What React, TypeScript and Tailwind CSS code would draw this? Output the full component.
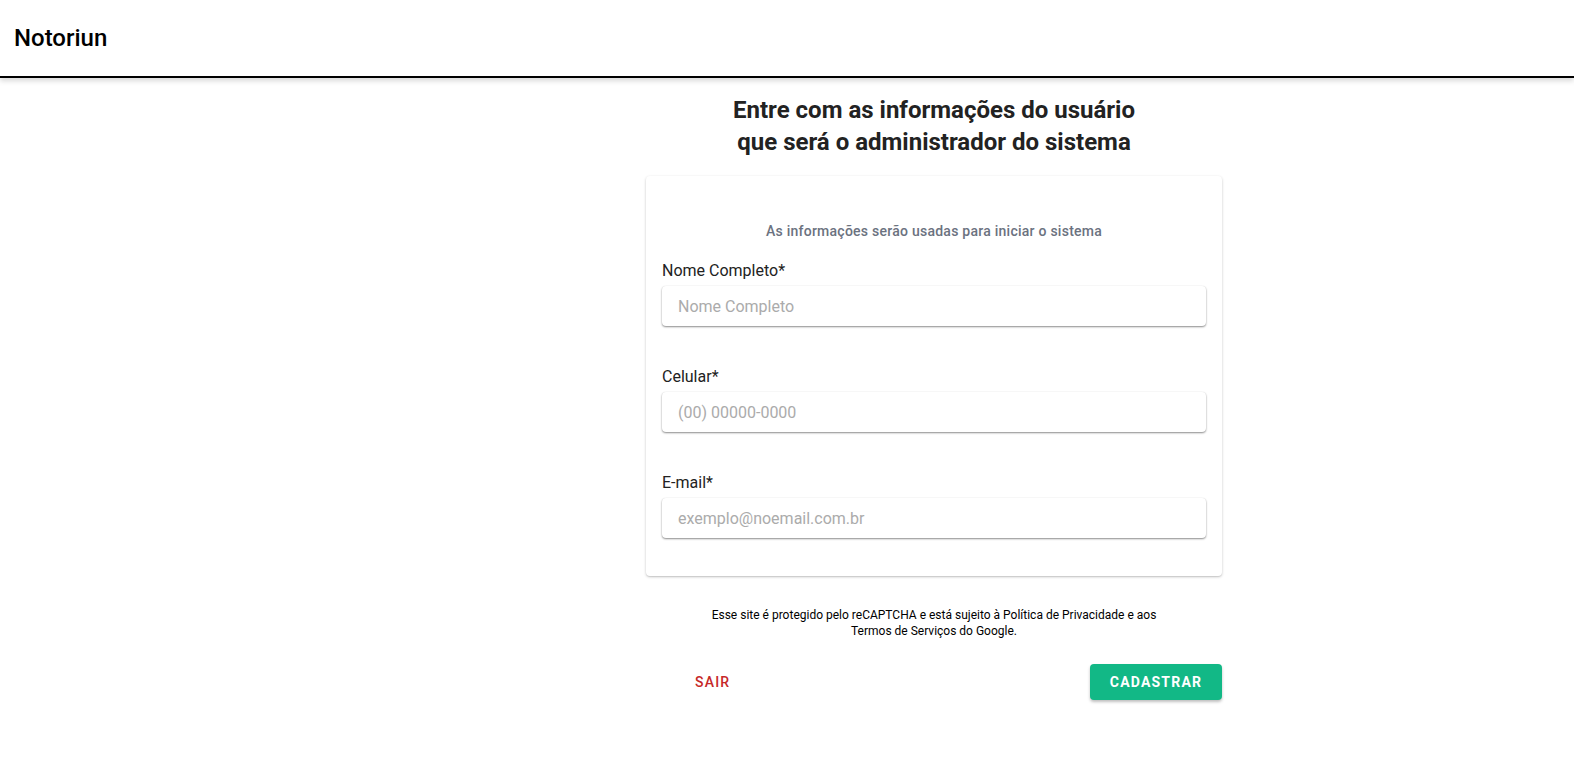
const fields = [
    { label: "Nome Completo*", placeholder: "Nome Completo", type: "text" },
    { label: "Celular*", placeholder: "(00) 00000-0000", type: "tel" },
    { label: "E-mail*", placeholder: "exemplo@noemail.com.br", type: "email" },
];

const App = () => {
    return (
        <div className="min-h-screen bg-white font-['Roboto',sans-serif] text-[#212121]">
            {/* Header */}
            <header className="h-[78px] flex items-center px-[14px] bg-white border-b-2 border-black shadow-[0_3px_5px_rgba(0,0,0,0.15)]">
                <h1 className="text-[24px] font-medium text-black">Notoriun</h1>
            </header>

            <main className="ml-[646px] w-[576px] pt-[16px]">
                {/* Title */}
                <h2 className="text-center text-[24px] leading-[32px] font-bold text-[#222]">
                    Entre com as informações do usuário
                    <br />
                    que será o administrador do sistema
                </h2>

                {/* Card */}
                <div className="mt-[18px] bg-white rounded-[4px] shadow-[0_1px_3px_rgba(0,0,0,0.2),0_1px_1px_rgba(0,0,0,0.08)] px-4 pt-[45px] pb-[38px]">
                    <p className="text-center text-[14px] leading-[20px] font-medium tracking-[0.25px] text-[#6b7280]">As informações serão usadas para iniciar o sistema</p>

                    <div className="mt-[18px] flex flex-col gap-[39px]">
                        {fields.map((field, index) => (
                            <div key={index} className="flex flex-col">
                                <label className="text-[16px] leading-[24px] text-[#222]">{field.label}</label>
                                <input
                                    type={field.type}
                                    placeholder={field.placeholder}
                                    className="mt-[3px] h-[40px] w-full rounded-[4px] bg-white px-4 text-[16px] text-[#222] placeholder:text-[#ababab] outline-none shadow-[0_1px_2px_rgba(0,0,0,0.45),0_0_1px_rgba(0,0,0,0.08)]"
                                />
                            </div>
                        ))}
                    </div>
                </div>

                {/* reCAPTCHA notice */}
                <p className="mt-[31px] mx-auto w-[460px] text-center text-[12px] leading-[16px] text-black">
                    Esse site é protegido pelo reCAPTCHA e está sujeito à Política de Privacidade e aos Termos de Serviços do Google.
                </p>

                {/* Actions */}
                <div className="mt-[25px] flex items-center justify-between">
                    <button className="ml-[35px] h-[36px] px-[14px] text-[14px] font-medium tracking-[1.2px] text-[#c62828]">SAIR</button>
                    <button className="mr-0 h-[36px] w-[132px] rounded-[4px] bg-[#12b886] text-[14px] font-bold tracking-[1.2px] text-white shadow-[0_2px_3px_rgba(0,0,0,0.25)]">CADASTRAR</button>
                </div>
            </main>
        </div>
    );
};

export default App;
